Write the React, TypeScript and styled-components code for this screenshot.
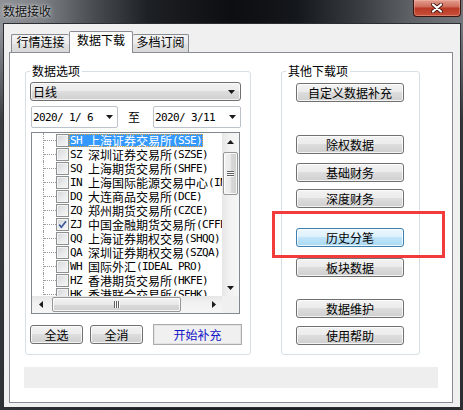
import React from "react";
import styled, { createGlobalStyle } from "styled-components";

const UI_FONT = `"Noto Sans CJK SC", "Liberation Sans", sans-serif`;
const MONO_FONT = `"DejaVu Sans Mono", "Liberation Mono", monospace`;

const GlobalStyle = createGlobalStyle`
  html, body { margin: 0; padding: 0; }
  body {
    width: 463px;
    height: 410px;
    overflow: hidden;
    background: #1c1f23;
    font-family: ${UI_FONT};
    font-size: 12px;
    color: #000;
  }
`;

const Frame = styled.div`
  position: relative;
  width: 463px;
  height: 410px;
  box-sizing: border-box;
  padding: 0 2px 2px 3px;
  display: flex;
  flex-direction: column;
  background:
    linear-gradient(to bottom, rgba(20, 22, 25, 0) 0px, rgba(20, 22, 25, 0) 30px, rgba(30, 33, 36, 0.75) 120px, rgba(30, 33, 36, 0.85) 100%),
    linear-gradient(
      90deg,
      #8f9398 0%,
      #7d8186 9%,
      #4a4e53 20%,
      #1d2024 32%,
      #0c0e11 50%,
      #14171b 64%,
      #3a3e43 78%,
      #5f6368 89%,
      #73777b 100%
    );
`;

const TitleBar = styled.div`
  height: 23px;
  flex: none;
  display: flex;
  justify-content: space-between;
  align-items: flex-start;
`;

const Title = styled.div`
  margin: 3px 0 0 0;
  line-height: 16px;
  font-size: 12px;
  color: #101010;
  text-shadow: 0 0 5px rgba(255, 255, 255, 0.75), 0 0 2px rgba(255, 255, 255, 0.6);
`;

const CloseButton = styled.div`
  width: 48px;
  height: 17px;
  box-sizing: border-box;
  border: 1px solid #3a1510;
  border-top: none;
  border-radius: 0 0 4px 4px;
  background: linear-gradient(#e39d8e 0%, #d0705e 40%, #b93a25 52%, #c8503a 100%);
  box-shadow: inset 0 0 0 1px rgba(255, 200, 190, 0.35);
  display: flex;
  align-items: center;
  justify-content: center;
`;

const Client = styled.div`
  flex: 1;
  border: 1px solid #2b2e32;
  background: #f0f0f0;
  display: flex;
  flex-direction: column;
  min-height: 0;
`;

const TabStrip = styled.div`
  height: 28px;
  flex: none;
  box-sizing: border-box;
  padding-left: 7px;
  display: flex;
  align-items: flex-end;
`;

const Tab = styled.div<{ $active?: boolean; $w: number; $side?: "left" | "right" }>`
  box-sizing: border-box;
  width: ${(p) => p.$w}px;
  height: ${(p) => (p.$active ? 22 : 18)}px;
  margin-bottom: ${(p) => (p.$active ? -1 : 0)}px;
  border: 1px solid #898c95;
  border-bottom: none;
  ${(p) => (p.$side === "left" ? "border-right: none;" : "")}
  ${(p) => (p.$side === "right" ? "border-left: none;" : "")}
  border-radius: 2px 2px 0 0;
  background: ${(p) =>
    p.$active
      ? "#ffffff"
      : "linear-gradient(#f4f4f4 0%, #ebebeb 50%, #e1e1e1 51%, #d8d8d8 100%)"};
  position: ${(p) => (p.$active ? "relative" : "static")};
  z-index: ${(p) => (p.$active ? 2 : "auto")};
  text-align: center;
  font-size: 12px;
  line-height: ${(p) => (p.$active ? 16 : 14)}px;
  white-space: nowrap;
`;

const TabPanel = styled.div`
  margin-left: 5px;
  width: 444px;
  height: 351px;
  box-sizing: border-box;
  border: 1px solid #898c95;
  background: #ffffff;
  padding: 10px 0 0 15px;
  display: flex;
  flex-direction: column;
`;

const Groups = styled.div`
  display: flex;
  align-items: stretch;
  gap: 30px;
`;

const GroupBox = styled.fieldset<{ $w: number; $pb: number }>`
  width: ${(p) => p.$w}px;
  box-sizing: border-box;
  margin: 0;
  padding: 0 0 ${(p) => p.$pb}px 0;
  min-width: 0;
  border: 1px solid #d5dfe5;
  border-radius: 3px;
`;

const Legend = styled.legend`
  margin-left: 4px;
  padding: 0 2px;
  font-size: 12px;
  line-height: 16px;
  color: #000;
`;

const Column = styled.div<{ $ml: number }>`
  display: flex;
  flex-direction: column;
  align-items: flex-start;
  margin-left: ${(p) => p.$ml}px;
`;

const Combo = styled.div`
  margin-top: 3px;
  width: 211px;
  height: 19px;
  box-sizing: border-box;
  border: 1px solid #707070;
  border-radius: 3px;
  background: linear-gradient(#f2f2f2 0%, #ebebeb 49%, #dddddd 50%, #cfcfcf 100%);
  box-shadow: inset 0 0 0 1px rgba(255, 255, 255, 0.7);
  display: flex;
  align-items: center;
  justify-content: space-between;
  padding: 0 5px 0 2px;
  line-height: 17px;
`;

const DateRow = styled.div`
  margin: 5px 0 0 1px;
  height: 22px;
  display: flex;
  align-items: center;
`;

const DateBox = styled.div<{ $w: number }>`
  width: ${(p) => p.$w}px;
  height: 22px;
  box-sizing: border-box;
  border: 1px solid #bcc2cb;
  border-radius: 2px;
  background: #ffffff;
  display: flex;
  align-items: center;
  justify-content: space-between;
  padding: 0 4px 0 1px;
`;

const MonoText = styled.span`
  font-family: ${MONO_FONT};
  font-size: 11px;
  letter-spacing: -0.62px;
  white-space: pre;
  line-height: 13px;
`;

const CjkText = styled.span`
  font-size: 12px;
  line-height: 13px;
`;

const ToLabel = styled.span`
  margin: 0 13px 0 10px;
  font-size: 12px;
  line-height: 16px;
`;

const ListBox = styled.div`
  margin: 4px 0 0 1px;
  width: 209px;
  height: 182px;
  box-sizing: border-box;
  border: 1px solid #828790;
  background: #ffffff;
  display: grid;
  grid-template-columns: 1fr 17px;
  grid-template-rows: 1fr 17px;
  overflow: hidden;
`;

const RowsArea = styled.div`
  overflow: hidden;
  display: flex;
  flex-direction: column;
`;

const Row = styled.div`
  height: 14px;
  flex: none;
  display: flex;
  align-items: flex-end;
  white-space: nowrap;
`;

const Gutter = styled.span`
  position: relative;
  width: 24px;
  height: 14px;
  flex: none;
  align-self: stretch;
  &::before {
    content: "";
    position: absolute;
    left: 11px;
    top: 0;
    bottom: 0;
    border-left: 1px dotted #9a9a9a;
  }
  &::after {
    content: "";
    position: absolute;
    left: 12px;
    top: 7px;
    width: 12px;
    border-top: 1px dotted #9a9a9a;
  }
`;

const CheckBox = styled.span`
  width: 13px;
  height: 13px;
  flex: none;
  box-sizing: border-box;
  border: 1px solid #8e8f8f;
  background: linear-gradient(135deg, #d3d5d8 0%, #e9eaeb 55%, #f7f7f7 100%);
  box-shadow: inset 0 0 0 1px #f4f4f4;
  display: flex;
  align-items: center;
  justify-content: center;
`;

const ItemLabel = styled.span<{ $selected?: boolean }>`
  display: inline-flex;
  align-items: center;
  flex: none;
  height: 13px;
  line-height: 13px;
  padding: 0 1px;
  font-size: 12px;
  background: ${(p) => (p.$selected ? "#3399ff" : "transparent")};
  color: ${(p) => (p.$selected ? "#ffffff" : "#000000")};
  outline: ${(p) => (p.$selected ? "1px dotted #e9a13b" : "none")};
  outline-offset: -1px;
`;

const VScroll = styled.div`
  display: flex;
  flex-direction: column;
  background: linear-gradient(90deg, #e6e6e6 0%, #f1f1f1 40%, #f6f6f6 100%);
`;

const HScroll = styled.div`
  display: flex;
  background: linear-gradient(#e6e6e6 0%, #f1f1f1 40%, #f6f6f6 100%);
`;

const Corner = styled.div`
  background: #f0f0f0;
`;

const ArrowCell = styled.div`
  width: 17px;
  height: 17px;
  flex: none;
  display: flex;
  align-items: center;
  justify-content: center;
`;

const VTrack = styled.div`
  flex: 1;
  display: flex;
  flex-direction: column;
  align-items: center;
`;

const HTrack = styled.div`
  flex: 1;
  display: flex;
  align-items: center;
`;

const VThumb = styled.div`
  margin-top: 2px;
  width: 15px;
  height: 43px;
  box-sizing: border-box;
  border: 1px solid #979797;
  border-radius: 2px;
  background: linear-gradient(90deg, #f3f3f3 0%, #e8e8e8 50%, #d9d9d9 51%, #d0d0d0 100%);
  box-shadow: inset 0 0 0 1px rgba(255, 255, 255, 0.8);
  display: flex;
  flex-direction: column;
  align-items: center;
  justify-content: center;
  gap: 1px;
`;

const HThumb = styled.div`
  margin-left: 3px;
  width: 129px;
  height: 15px;
  box-sizing: border-box;
  border: 1px solid #979797;
  border-radius: 2px;
  background: linear-gradient(#f3f3f3 0%, #e8e8e8 50%, #d9d9d9 51%, #d0d0d0 100%);
  box-shadow: inset 0 0 0 1px rgba(255, 255, 255, 0.8);
  display: flex;
  align-items: center;
  justify-content: center;
  gap: 1px;
`;

const GripLine = styled.span<{ $vertical?: boolean }>`
  display: block;
  width: ${(p) => (p.$vertical ? 1 : 7)}px;
  height: ${(p) => (p.$vertical ? 7 : 1)}px;
  background: #5f5f5f;
  box-shadow: ${(p) => (p.$vertical ? "1px 0 0 #fafafa" : "0 1px 0 #fafafa")};
`;

const ButtonRow = styled.div`
  margin-top: 10px;
  height: 21px;
  display: flex;
  align-items: center;
`;

const PushButton = styled.div<{ $w: number; $mt?: number; $ml?: number; $hot?: boolean }>`
  width: ${(p) => p.$w}px;
  height: 19px;
  flex: none;
  margin-top: ${(p) => p.$mt ?? 0}px;
  margin-left: ${(p) => p.$ml ?? 0}px;
  box-sizing: border-box;
  border: 1px solid ${(p) => (p.$hot ? "#3c7fb1" : "#707070")};
  border-radius: 3px;
  background: ${(p) =>
    p.$hot
      ? "linear-gradient(#ecf7fd 0%, #dcf1fc 49%, #c1e5f9 50%, #aad8f3 100%)"
      : "linear-gradient(#f2f2f2 0%, #ebebeb 49%, #dddddd 50%, #cfcfcf 100%)"};
  box-shadow: inset 0 0 0 1px rgba(255, 255, 255, 0.75);
  text-align: center;
  font-size: 12px;
  line-height: 17px;
  white-space: nowrap;
`;

const StartButton = styled.div`
  margin-left: 10px;
  width: 89px;
  height: 21px;
  flex: none;
  box-sizing: border-box;
  border: 1px solid #ababab;
  box-shadow: inset 0 0 0 1px #e2e2e2;
  background: #f0f0f0;
  color: #1010c8;
  text-align: center;
  font-size: 12px;
  line-height: 19px;
`;

const StatusBox = styled.div`
  margin: 12px 0 0 -1px;
  width: 414px;
  height: 21px;
  background: #eeeeee;
`;

const Annotation = styled.div`
  position: absolute;
  left: 272px;
  top: 211px;
  width: 173px;
  height: 47px;
  box-sizing: border-box;
  border: 3px solid #f23c3c;
  pointer-events: none;
`;

const Tri = ({ dir }: { dir: "up" | "down" | "left" | "right" }) => {
  const pts: Record<string, string> = {
    down: "0,0 7,0 3.5,4",
    up: "0,4 7,4 3.5,0",
    left: "4,0 4,7 0,3.5",
    right: "0,0 0,7 4,3.5",
  };
  const horiz = dir === "left" || dir === "right";
  return (
    <svg width={horiz ? 4 : 7} height={horiz ? 7 : 4} viewBox={horiz ? "0 0 4 7" : "0 0 7 4"}>
      <polygon points={pts[dir]} fill="#1a1a1a" />
    </svg>
  );
};

const items = [
  { code: "SH", name: "上海证券交易所", ex: "(SSE)", selected: true },
  { code: "SZ", name: "深圳证券交易所", ex: "(SZSE)" },
  { code: "SQ", name: "上海期货交易所", ex: "(SHFE)" },
  { code: "IN", name: "上海国际能源交易中心", ex: "(INE)" },
  { code: "DQ", name: "大连商品交易所", ex: "(DCE)" },
  { code: "ZQ", name: "郑州期货交易所", ex: "(CZCE)" },
  { code: "ZJ", name: "中国金融期货交易所", ex: "(CFFEX)", checked: true },
  { code: "QQ", name: "上海证券期权交易", ex: "(SHQQ)" },
  { code: "QA", name: "深圳证券期权交易", ex: "(SZQA)" },
  { code: "WH", name: "国际外汇", ex: "(IDEAL PRO)" },
  { code: "HZ", name: "香港期货交易所", ex: "(HKFE)" },
  { code: "HK", name: "香港联合交易所", ex: "(SEHK)" },
];

const rightButtons = [
  { label: "自定义数据补充", mt: 4 },
  { label: "除权数据", mt: 33 },
  { label: "基础财务", mt: 9 },
  { label: "深度财务", mt: 7 },
  { label: "历史分笔", mt: 20, hot: true },
  { label: "板块数据", mt: 11 },
  { label: "数据维护", mt: 22 },
  { label: "使用帮助", mt: 8 },
];

export default function App() {
  return (
    <>
      <GlobalStyle />
      <Frame>
        <TitleBar>
          <Title>数据接收</Title>
          <CloseButton>
            <svg width="12" height="10" viewBox="0 0 12 10">
              <path d="M2 1.5 L10 8.5 M10 1.5 L2 8.5" stroke="#4a1a12" strokeWidth="4" strokeLinecap="round" />
              <path d="M2 1.5 L10 8.5 M10 1.5 L2 8.5" stroke="#ffffff" strokeWidth="2.2" strokeLinecap="round" />
            </svg>
          </CloseButton>
        </TitleBar>
        <Client>
          <TabStrip>
            <Tab $w={58} $side="left">行情连接</Tab>
            <Tab $w={64} $active>数据下载</Tab>
            <Tab $w={56} $side="right">多档订阅</Tab>
          </TabStrip>
          <TabPanel>
            <Groups>
              <GroupBox $w={226} $pb={9}>
                <Legend>数据选项</Legend>
                <Column $ml={4}>
                  <Combo>
                    <span>日线</span>
                    <Tri dir="down" />
                  </Combo>
                  <DateRow>
                    <DateBox $w={87}>
                      <MonoText>2020/ 1/ 6</MonoText>
                      <Tri dir="down" />
                    </DateBox>
                    <ToLabel>至</ToLabel>
                    <DateBox $w={88}>
                      <MonoText>2020/ 3/11</MonoText>
                      <Tri dir="down" />
                    </DateBox>
                  </DateRow>
                  <ListBox>
                    <RowsArea>
                      {items.map((it) => (
                        <Row key={it.code}>
                          <Gutter />
                          <CheckBox>
                            {it.checked && (
                              <svg width="9" height="9" viewBox="0 0 9 9">
                                <path d="M1.2 4.6 L3.4 7.2 L8 1.2" fill="none" stroke="#3b5c9c" strokeWidth="1.7" />
                              </svg>
                            )}
                          </CheckBox>
                          <ItemLabel $selected={it.selected}>
                            <MonoText>{it.code} </MonoText>
                            <CjkText>{it.name}</CjkText>
                            <MonoText>{it.ex}</MonoText>
                          </ItemLabel>
                        </Row>
                      ))}
                    </RowsArea>
                    <VScroll>
                      <ArrowCell>
                        <Tri dir="up" />
                      </ArrowCell>
                      <VTrack>
                        <VThumb>
                          <GripLine />
                          <GripLine />
                          <GripLine />
                        </VThumb>
                      </VTrack>
                      <ArrowCell>
                        <Tri dir="down" />
                      </ArrowCell>
                    </VScroll>
                    <HScroll>
                      <ArrowCell>
                        <Tri dir="left" />
                      </ArrowCell>
                      <HTrack>
                        <HThumb>
                          <GripLine $vertical />
                          <GripLine $vertical />
                          <GripLine $vertical />
                        </HThumb>
                      </HTrack>
                      <ArrowCell>
                        <Tri dir="right" />
                      </ArrowCell>
                    </HScroll>
                    <Corner />
                  </ListBox>
                  <ButtonRow>
                    <PushButton $w={53}>全选</PushButton>
                    <PushButton $w={53} $ml={7}>全消</PushButton>
                    <StartButton>开始补充</StartButton>
                  </ButtonRow>
                </Column>
              </GroupBox>
              <GroupBox $w={139} $pb={9}>
                <Legend>其他下载项</Legend>
                <Column $ml={14}>
                  {rightButtons.map((b) => (
                    <PushButton key={b.label} $w={108} $mt={b.mt} $hot={b.hot}>
                      {b.label}
                    </PushButton>
                  ))}
                </Column>
              </GroupBox>
            </Groups>
            <StatusBox />
          </TabPanel>
        </Client>
        <Annotation />
      </Frame>
    </>
  );
}
